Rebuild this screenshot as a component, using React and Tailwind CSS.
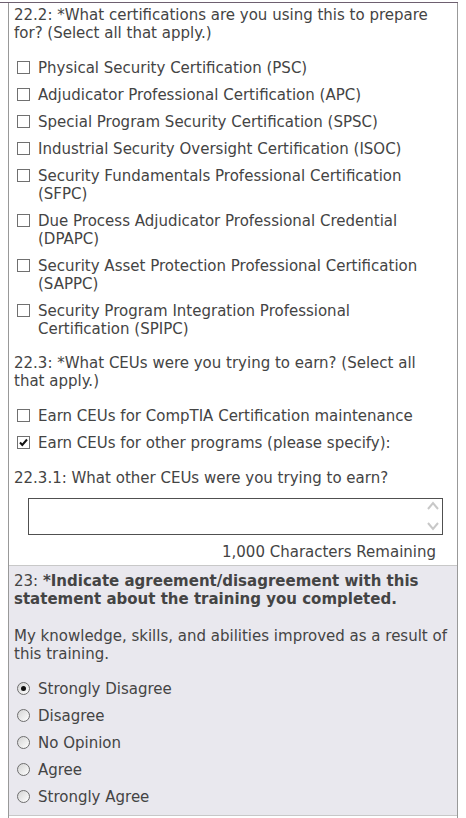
import { memo } from "react";

const certs = [
  "Physical Security Certification (PSC)",
  "Adjudicator Professional Certification (APC)",
  "Special Program Security Certification (SPSC)",
  "Industrial Security Oversight Certification (ISOC)",
  "Security Fundamentals Professional Certification (SFPC)",
  "Due Process Adjudicator Professional Credential (DPAPC)",
  "Security Asset Protection Professional Certification (SAPPC)",
  "Security Program Integration Professional Certification (SPIPC)",
];

const ceus = [
  { label: "Earn CEUs for CompTIA Certification maintenance", checked: false },
  { label: "Earn CEUs for other programs (please specify):", checked: true },
];

const ratings = ["Strongly Disagree", "Disagree", "No Opinion", "Agree", "Strongly Agree"];

const Box = ({ checked }) => (
  <span className="mt-[2px] flex h-[13px] w-[13px] shrink-0 items-center justify-center border border-[#707070] bg-white">
    {checked && (
      <svg width="11" height="11" viewBox="0 0 11 11">
        <path d="M2 5.5 L4.3 8 L9 2.5" fill="none" stroke="#111" strokeWidth="2" />
      </svg>
    )}
  </span>
);

const Radio = ({ checked }) => (
  <span className="mt-[2px] flex h-[13px] w-[13px] shrink-0 items-center justify-center rounded-full border border-[#6e6e6e] bg-gradient-to-br from-[#d4d4d4] to-white">
    {checked && <span className="h-[5px] w-[5px] rounded-full bg-[#111]" />}
  </span>
);

const Row = ({ children, control }) => (
  <div className="mb-[9px] flex gap-[8px] pl-[3px] pr-[4px]">
    {control}
    <span>{children}</span>
  </div>
);

const App = () => {
  return (
    <div className="min-h-[818px] bg-white text-[15px] leading-[18px] text-[#444]" style={{ fontFamily: '"DejaVu Sans", Verdana, sans-serif' }}>
      <div className="h-[2px]" />
      <div className="h-px w-[458px] bg-[#6e6070]" />
      <div className="ml-[8px] min-h-[815px] w-[450px] border-x border-[#999]">
        <div className="pl-[5px] pr-[8px] pt-[3px]">
          <p>22.2: *What certifications are you using this to prepare for? (Select all that apply.)</p>
          <div className="mt-[17px]">
            {certs.map((c) => (
              <Row key={c} control={<Box />}>
                {c}
              </Row>
            ))}
          </div>
          <p className="mt-[16px]">22.3: *What CEUs were you trying to earn? (Select all that apply.)</p>
          <div className="mt-[17px]">
            {ceus.map((c) => (
              <Row key={c.label} control={<Box checked={c.checked} />}>
                {c.label}
              </Row>
            ))}
          </div>
          <p className="mt-[17px]">22.3.1: What other CEUs were you trying to earn?</p>
          <div className="mt-[11px] ml-[14px] flex h-[37px] w-[415px] justify-end border border-[#505050] bg-white pr-[2px]">
            <svg width="14" height="34" viewBox="0 0 14 34" className="mt-[1px]">
              <path d="M2 9 L7 3 L12 9" fill="none" stroke="#c8c8c8" strokeWidth="2" />
              <path d="M2 23 L7 29 L12 23" fill="none" stroke="#c8c8c8" strokeWidth="2" />
            </svg>
          </div>
          <p className="mt-[8px] pb-[4px] pr-[13px] text-right">1,000 Characters Remaining</p>
        </div>
        <div className="border-y border-[#c8c8c8] bg-[#e9e8ee] pl-[5px] pr-[8px] pt-[6px]">
          <p>
            23: <b>*Indicate agreement/disagreement with this statement about the training you completed.</b>
          </p>
          <p className="mt-[19px]">My knowledge, skills, and abilities improved as a result of this training.</p>
          <div className="mt-[17px]">
            {ratings.map((r, i) => (
              <Row key={r} control={<Radio checked={i === 0} />}>
                {r}
              </Row>
            ))}
          </div>
        </div>
      </div>
    </div>
  );
};

export default memo(App);
